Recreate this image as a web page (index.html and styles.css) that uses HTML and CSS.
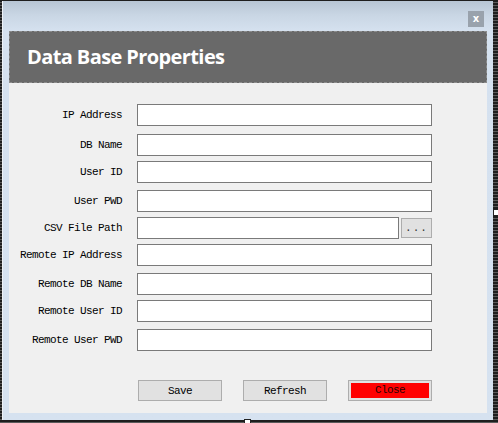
FILE: index.html
```html
<!DOCTYPE html>
<html lang="en">
<head>
    <meta charset="UTF-8">
    <meta name="viewport" content="width=device-width, initial-scale=1.0">
    <title>Data Base Properties</title>
    <link rel="stylesheet" href="styles.css">
</head>
<body>
    <div id="window">
        <!-- Title bar with the close box -->
        <div id="titlebar">
            <button id="closeBox">x</button>
        </div>
        <div id="panel">
            <div id="header">Data Base Properties</div>
            <div id="content">
                <!-- Connection settings -->
                <div class="row">
                    <label for="ipAddress">IP Address</label>
                    <input type="text" id="ipAddress">
                </div>
                <div class="row row-wide">
                    <label for="dbName">DB Name</label>
                    <input type="text" id="dbName">
                </div>
                <div class="row">
                    <label for="userId">User ID</label>
                    <input type="text" id="userId">
                </div>
                <div class="row row-mid">
                    <label for="userPwd">User PWD</label>
                    <input type="text" id="userPwd">
                </div>
                <div class="row">
                    <label for="csvPath">CSV File Path</label>
                    <div class="path">
                        <input type="text" id="csvPath">
                        <button class="browse">...</button>
                    </div>
                </div>
                <div class="row">
                    <label for="remoteIp">Remote IP Address</label>
                    <input type="text" id="remoteIp">
                </div>
                <div class="row row-mid">
                    <label for="remoteDb">Remote DB Name</label>
                    <input type="text" id="remoteDb">
                </div>
                <div class="row">
                    <label for="remoteUser">Remote User ID</label>
                    <input type="text" id="remoteUser">
                </div>
                <div class="row row-mid">
                    <label for="remotePwd">Remote User PWD</label>
                    <input type="text" id="remotePwd">
                </div>
                <!-- Actions -->
                <div id="actions">
                    <button class="action">Save</button>
                    <button class="action">Refresh</button>
                    <button class="action close"><span>Close</span></button>
                </div>
            </div>
        </div>
    </div>
    <!-- Resize grips -->
    <div class="grip grip-right"></div>
    <div class="grip grip-bottom"></div>
</body>
</html>
```

FILE: styles.css
```css
body {
    margin: 0;
    width: 498px;
    height: 423px;
    overflow: hidden;
    position: relative;
    background: repeating-linear-gradient(180deg, #1e1e1e 0, #1e1e1e 2px, #5a5a5a 2px, #5a5a5a 3px);
    font-family: "Liberation Mono", "DejaVu Sans Mono", monospace;
}

#window {
    box-sizing: border-box;
    width: 491px;
    height: 419px;
    margin: 1px 0 0 2px;
    padding: 0 6px 7px 6px;
    border-left: 1px solid #eef2f7;
    background: linear-gradient(180deg, #b7c5d4 0, #c9d6e4 14px, #d5e1ef 30px, #d6e2f0 100%);
    display: flex;
    flex-direction: column;
}

#titlebar {
    height: 30px;
    box-sizing: border-box;
    padding: 10px 3px 0 0;
    display: flex;
    justify-content: flex-end;
    align-items: flex-start;
}

#closeBox {
    width: 16px;
    height: 16px;
    padding: 0;
    border: none;
    background-color: #99a2ac;
    color: #ffffff;
    font-family: "DejaVu Sans", sans-serif;
    font-weight: bold;
    font-size: 10px;
    line-height: 14px;
}

#panel {
    flex: 1;
    display: flex;
    flex-direction: column;
    background-color: #f0f0f0;
}

#header {
    box-sizing: border-box;
    height: 52px;
    padding: 0 0 2px 17px;
    display: flex;
    align-items: center;
    background-color: #696969;
    border: 1px dashed #8c8c8c;
    color: #ffffff;
    font-family: "Open Sans", sans-serif;
    font-weight: bold;
    font-size: 20px;
    letter-spacing: -0.6px;
}

#content {
    padding: 21px 0 0 0;
}

.row {
    display: flex;
    align-items: center;
    height: 22px;
    margin-top: 5px;
}

.row:first-child {
    margin-top: 0;
}

.row-wide {
    margin-top: 8px;
}

.row-mid {
    margin-top: 7px;
}

label,
.action,
.browse {
    font-family: "Liberation Mono", "DejaVu Sans Mono", monospace;
    font-size: 11px;
    letter-spacing: -0.6px;
    color: #000000;
}

label {
    width: 113px;
    margin-right: 15px;
    text-align: right;
    white-space: nowrap;
}

input[type="text"] {
    box-sizing: border-box;
    width: 295px;
    height: 22px;
    margin: 0;
    padding: 0 3px;
    border: 1px solid #7a7a7a;
    background-color: #ffffff;
}

.path {
    display: flex;
    align-items: center;
    width: 295px;
}

.path input[type="text"] {
    width: 262px;
}

.browse {
    box-sizing: border-box;
    width: 31px;
    height: 20px;
    margin-left: 2px;
    padding: 0;
    border: 1px solid #adadad;
    background-color: #e1e1e1;
    color: #333333;
    letter-spacing: 1px;
}

#actions {
    display: flex;
    margin: 29px 0 0 129px;
    gap: 21px;
}

.action {
    box-sizing: border-box;
    width: 84px;
    height: 21px;
    padding: 0;
    border: 1px solid #adadad;
    background-color: #e1e1e1;
}

.action.close {
    padding: 2px;
}

.action.close span {
    display: block;
    height: 100%;
    line-height: 15px;
    background-color: #ff0000;
    color: #2a0000;
}

.grip {
    position: absolute;
    background-color: #ffffff;
    border: 1px solid #222222;
}

.grip-right {
    left: 493px;
    top: 209px;
    width: 4px;
    height: 5px;
}

.grip-bottom {
    left: 244px;
    top: 419px;
    width: 5px;
    height: 4px;
}
```
